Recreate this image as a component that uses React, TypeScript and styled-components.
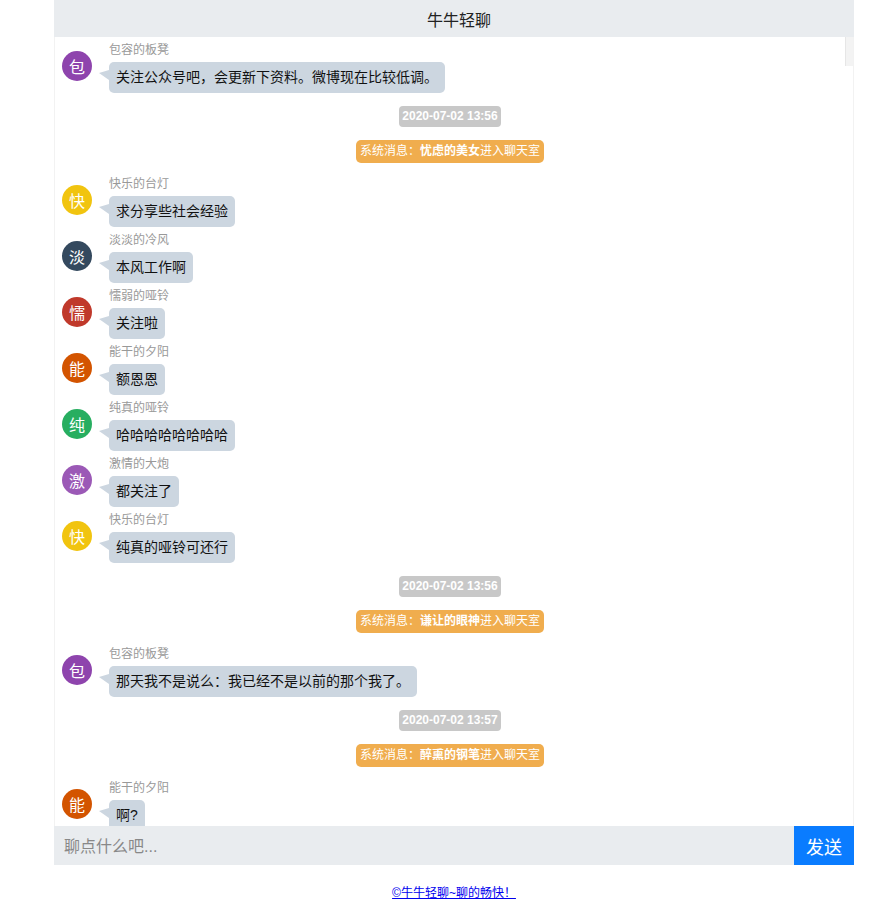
import React from 'react';
import styled, { createGlobalStyle } from 'styled-components';

const GlobalStyle = createGlobalStyle`
  html, body {
    margin: 0;
    padding: 0;
    background: #fff;
    font-family: "Liberation Sans", "Noto Sans CJK SC", sans-serif;
  }
`;

const Page = styled.div`
  width: 800px;
  margin-left: 54px;
`;

const Header = styled.div`
  height: 37px;
  background: #e9ecef;
  display: flex;
  align-items: center;
  justify-content: center;
  padding-left: 10px;
  font-size: 16px;
  color: #222;
`;

const Log = styled.div`
  position: relative;
  height: 789px;
  overflow: hidden;
  padding-right: 8px;
  border-left: 1px solid #f2f2f2;
  border-right: 1px solid #f2f2f2;
  box-sizing: border-box;
`;

const ScrollThumb = styled.div`
  position: absolute;
  top: 0;
  right: 0;
  width: 7px;
  height: 29px;
  background: #f3f3f3;
  border-left: 1px solid #e6e6e6;
`;

const Row = styled.div`
  display: flex;
  align-items: flex-start;
  gap: 17px;
  padding-left: 7px;
  margin: 5px 0;
`;

const Avatar = styled.div<{ $bg: string }>`
  width: 30px;
  height: 30px;
  border-radius: 50%;
  background: ${({ $bg }) => $bg};
  color: #fff;
  font-size: 16px;
  display: flex;
  align-items: center;
  justify-content: center;
  margin-top: 9px;
  flex-shrink: 0;
`;

const Body = styled.div`
  display: flex;
  flex-direction: column;
  align-items: flex-start;
  gap: 3px;
`;

const Name = styled.div`
  font-size: 12px;
  line-height: 17px;
  color: #999;
`;

const Bubble = styled.div`
  position: relative;
  background: #ccd6e0;
  border-radius: 5px;
  padding: 7px;
  font-size: 14px;
  line-height: 17px;
  color: #111;

  &::before {
    content: '';
    position: absolute;
    left: -10px;
    top: 8px;
    border-style: solid;
    border-width: 3px 10px 7px 0;
    border-color: transparent #ccd6e0 transparent transparent;
  }
`;

const Notice = styled.div`
  display: flex;
  justify-content: center;
  margin: 13px 0;
`;

const Stamp = styled.span`
  background: #c8c8c8;
  color: #fff;
  font-size: 12px;
  font-weight: bold;
  line-height: 13px;
  padding: 4px 3px;
  border-radius: 4px;
`;

const SysTag = styled.span`
  background: #f0ad4e;
  color: #fff;
  font-size: 12px;
  line-height: 15px;
  padding: 4px 4px;
  border-radius: 5px;

  b {
    font-weight: bold;
  }
`;

const InputBar = styled.div`
  display: flex;
  height: 39px;
  background: #e9ecef;
`;

const TextInput = styled.input`
  flex: 1;
  border: none;
  outline: none;
  background: transparent;
  padding: 2px 10px 0;
  font-size: 16px;
  font-family: "Liberation Sans", "Noto Sans CJK SC", sans-serif;
  color: #333;

  &::placeholder {
    color: #888;
  }
`;

const SendButton = styled.button`
  width: 60px;
  border: none;
  background: #0a7cff;
  color: #fff;
  font-size: 18px;
  font-family: "Liberation Sans", "Noto Sans CJK SC", sans-serif;
  cursor: pointer;
`;

const Footer = styled.div`
  text-align: center;
  padding-top: 18px;
  font-size: 12px;

  a {
    color: #0000ee;
  }
`;

type Item =
  | { kind: 'msg'; name: string; color: string; text: string }
  | { kind: 'time'; text: string }
  | { kind: 'sys'; who: string };

const log: Item[] = [
  { kind: 'msg', name: '包容的板凳', color: '#8e44ad', text: '关注公众号吧，会更新下资料。微博现在比较低调。' },
  { kind: 'time', text: '2020-07-02 13:56' },
  { kind: 'sys', who: '忧虑的美女' },
  { kind: 'msg', name: '快乐的台灯', color: '#f1c40f', text: '求分享些社会经验' },
  { kind: 'msg', name: '淡淡的冷风', color: '#34495e', text: '本风工作啊' },
  { kind: 'msg', name: '懦弱的哑铃', color: '#c0392b', text: '关注啦' },
  { kind: 'msg', name: '能干的夕阳', color: '#d35400', text: '额恩恩' },
  { kind: 'msg', name: '纯真的哑铃', color: '#27ae60', text: '哈哈哈哈哈哈哈哈' },
  { kind: 'msg', name: '激情的大炮', color: '#9b59b6', text: '都关注了' },
  { kind: 'msg', name: '快乐的台灯', color: '#f1c40f', text: '纯真的哑铃可还行' },
  { kind: 'time', text: '2020-07-02 13:56' },
  { kind: 'sys', who: '谦让的眼神' },
  { kind: 'msg', name: '包容的板凳', color: '#8e44ad', text: '那天我不是说么：我已经不是以前的那个我了。' },
  { kind: 'time', text: '2020-07-02 13:57' },
  { kind: 'sys', who: '醉熏的钢笔' },
  { kind: 'msg', name: '能干的夕阳', color: '#d35400', text: '啊?' },
];

const App: React.FC = () => {
  return (
    <Page>
      <GlobalStyle />
      <Header>牛牛轻聊</Header>
      <Log>
        {log.map((item, i) => {
          if (item.kind === 'time') {
            return (
              <Notice key={i}>
                <Stamp>{item.text}</Stamp>
              </Notice>
            );
          }
          if (item.kind === 'sys') {
            return (
              <Notice key={i}>
                <SysTag>
                  系统消息：<b>{item.who}</b>进入聊天室
                </SysTag>
              </Notice>
            );
          }
          return (
            <Row key={i}>
              <Avatar $bg={item.color}>{item.name[0]}</Avatar>
              <Body>
                <Name>{item.name}</Name>
                <Bubble>{item.text}</Bubble>
              </Body>
            </Row>
          );
        })}
        <ScrollThumb />
      </Log>
      <InputBar>
        <TextInput placeholder="聊点什么吧..." />
        <SendButton>发送</SendButton>
      </InputBar>
      <Footer>
        <a href="#">©牛牛轻聊~聊的畅快！</a>
      </Footer>
    </Page>
  );
};

export default App;
